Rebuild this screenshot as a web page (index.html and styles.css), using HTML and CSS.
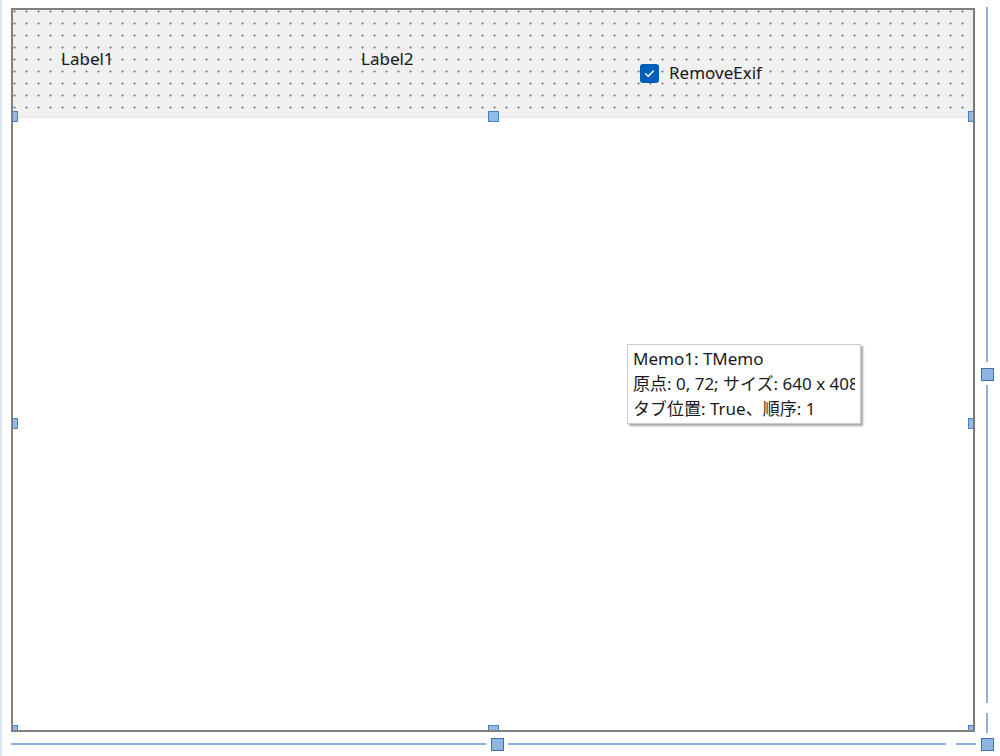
FILE: index.html
```html
<!DOCTYPE html>
<html lang="ja">
<head>
<meta charset="utf-8">
<title>Form Designer</title>
<link rel="stylesheet" href="styles.css">
</head>
<body>
<div class="designer">
  <div class="strip"></div>
  <div class="form">
    <div class="client">
      <div class="panel">
        <span class="label l1">Label1</span>
        <span class="label l2">Label2</span>
        <span class="check">
          <span class="box">
            <svg width="19" height="19" viewBox="0 0 19 19"><path d="M5.6 9.8 L8.2 12.3 L13.4 6.9" fill="none" stroke="#ffffff" stroke-width="1.4" stroke-linecap="round" stroke-linejoin="round"/></svg>
          </span>
          <span class="check-text">RemoveExif</span>
        </span>
      </div>
      <div class="memo"></div>

      <span class="h h-tl"></span>
      <span class="h h-tm"></span>
      <span class="h h-tr"></span>
      <span class="h h-ml"></span>
      <span class="h h-mr"></span>
      <span class="h h-bl"></span>
      <span class="h h-bm"></span>
      <span class="h h-br"></span>

      <div class="tip">
        <div class="tip-inner">
          <div class="tip-line">Memo1: TMemo</div>
          <div class="tip-line">原点: 0, 72; サイズ: 640 x 408</div>
          <div class="tip-line">タブ位置: True、順序: 1</div>
        </div>
      </div>
    </div>
  </div>

  <span class="g gv gv1"></span>
  <span class="g gv gv2"></span>
  <span class="g gv gv3"></span>
  <span class="g gh gh1"></span>
  <span class="g gh gh2"></span>
  <span class="g gh gh3"></span>
  <span class="gk gk-r"></span>
  <span class="gk gk-b"></span>
  <span class="gk gk-c"></span>
</div>
</body>
</html>
```
FILE: styles.css
```css
html, body {
  margin: 0;
  padding: 0;
  background: #ffffff;
}
body {
  width: 1000px;
  height: 756px;
  overflow: hidden;
  font-family: "Noto Sans", "Noto Sans CJK JP", sans-serif;
  font-size: 17px;
  color: #1a1a1a;
}
.designer {
  position: relative;
  width: 1000px;
  height: 756px;
  padding: 8px 0 0 11px;
  box-sizing: border-box;
}
.strip {
  position: absolute;
  left: 0;
  top: 0;
  width: 2px;
  height: 756px;
  background: #d9e6f4;
}
.form {
  width: 964px;
  height: 724px;
  box-sizing: border-box;
  border: 2px solid #808080;
  border-right-color: #7a7a7a;
}
.client {
  position: relative;
  width: 960px;
  height: 720px;
  overflow: hidden;
  display: flex;
  flex-direction: column;
  background: #ffffff;
}
.panel {
  height: 108px;
  flex: none;
  box-sizing: border-box;
  border-bottom: 1px solid #e3e3e3;
  background-color: #f0f0f0;
  background-image: radial-gradient(circle at 1.5px 1.5px, #8e8e8e 0.9px, rgba(142,142,142,0) 1.4px);
  background-size: 12px 12px;
  background-position: 0 0;
  display: flex;
  align-items: flex-start;
  padding-left: 48px;
  padding-top: 38px;
}
.label {
  display: block;
  line-height: 22px;
  white-space: nowrap;
}
.l1 { width: 300px; }
.l2 { width: 279px; }
.check {
  display: flex;
  align-items: center;
  margin-top: 14px;
}
.box {
  width: 19px;
  height: 19px;
  border-radius: 3px;
  background: #005fb8;
  display: block;
}
.box svg { display: block; }
.check-text {
  margin-left: 10px;
  line-height: 22px;
}
.memo {
  flex: 1;
  background: #ffffff;
}
.h {
  position: absolute;
  width: 11px;
  height: 11px;
  box-sizing: border-box;
  background: #93b9e4;
  border: 1px solid #4b80c0;
}
.h-tl { left: -6px; top: 101px; }
.h-tm { left: 475px; top: 101px; }
.h-tr { left: 955px; top: 101px; }
.h-ml { left: -6px; top: 408px; }
.h-mr { left: 955px; top: 408px; }
.h-bl { left: -6px; top: 715px; }
.h-bm { left: 475px; top: 715px; }
.h-br { left: 955px; top: 715px; }
.tip {
  position: absolute;
  left: 614px;
  top: 334px;
  width: 234px;
  height: 80px;
  box-sizing: border-box;
  background: #ffffff;
  border: 1px solid #c6ccd2;
  box-shadow: 2px 2px 2px rgba(0,0,0,0.35);
  padding: 1px 5px 0 5px;
}
.tip-inner {
  overflow: hidden;
  white-space: nowrap;
}
.tip-line {
  line-height: 25px;
  color: #1a1a1a;
}
.g {
  position: absolute;
  background: #8ab3e2;
}
.gv { left: 986px; width: 2px; }
.gv1 { top: 7px; height: 355px; }
.gv2 { top: 385px; height: 318px; }
.gv3 { top: 713px; height: 20px; }
.gh { top: 743px; height: 2px; }
.gh1 { left: 11px; width: 475px; }
.gh2 { left: 508px; width: 438px; }
.gh3 { left: 956px; width: 20px; }
.gk {
  position: absolute;
  width: 13px;
  height: 13px;
  box-sizing: border-box;
  background: #8fb4e1;
  border: 1px solid #3e70ae;
}
.gk-r { left: 981px; top: 368px; }
.gk-b { left: 491px; top: 738px; }
.gk-c { left: 981px; top: 738px; }
```
